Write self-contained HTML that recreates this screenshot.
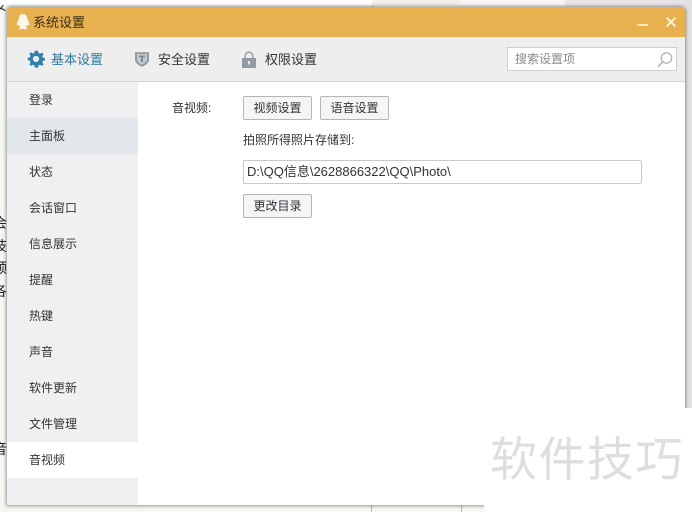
<!DOCTYPE html>
<html lang="zh"><head><meta charset="utf-8"><style>
html,body{margin:0;padding:0}
body{width:692px;height:512px;position:relative;overflow:hidden;background:#f6f6f2;font-family:"Liberation Sans","Noto Sans CJK SC",sans-serif;font-size:12px;color:#333}
.a{position:absolute;white-space:nowrap}
.win{position:absolute;left:7px;top:7px;width:678px;height:498px;background:#fff;border-radius:4px 4px 0 0;box-shadow:0 0 3px 1px rgba(70,70,70,.55);overflow:hidden}
.t{position:absolute;left:0;top:0;width:678px;height:30px;background:#e8b14f}
.bar{position:absolute;left:0;top:30px;width:678px;height:44px;background:#eeeeee;border-bottom:1px solid #d4d4d4}
.side{position:absolute;left:0;top:75px;width:131px;height:423px;background:#f0f0f2}
.it{position:absolute;left:0;width:131px;height:36px;line-height:36px;text-indent:22px;color:#333}
.btn{position:absolute;box-sizing:border-box;height:24px;width:69px;border:1px solid #b5b5b5;border-radius:2px;background:#f3f5f7;text-align:center;line-height:22px;color:#333}
.tab{font-size:13px;line-height:18px}
</style></head><body>
<div class="a" style="left:-6px;top:-2px;font-size:13px;color:#222;line-height:16px">安</div>
<div class="a" style="left:-7px;top:212px;font-size:14px;line-height:22.5px;color:#222;white-space:normal;width:14px">会技颈各</div>
<div class="a" style="left:-7px;top:439px;font-size:14px;color:#222">音</div>
<div class="a" style="left:0;top:0;width:372px;height:5px;background:#fff"></div>
<div class="a" style="left:372px;top:0;width:1px;height:7px;background:#999"></div>
<div class="a" style="left:372px;top:0;width:88px;height:6px;background:#f0efe8"></div>
<div class="a" style="left:371px;top:505px;width:1px;height:7px;background:#bbb"></div>
<div class="a" style="left:461px;top:505px;width:1px;height:7px;background:#bbb"></div>
<div class="a" style="left:565px;top:0;width:127px;height:7px;background:#e6e6e6"></div>
<div class="a" style="left:685px;top:0;width:7px;height:410px;background:#e2e2e2"></div>
<div class="win">
<div class="t"></div>
<svg class="a" style="left:8px;top:6px" width="16" height="18" viewBox="0 0 16 18"><path d="M8 1C4.8 1 3.6 3.600 3.600 6.200 2.600 8 1.400 10.300 2 12.400c.6.6 1.400-.4 1.800-1 .3 1.200.8 2 1.500 2.700-1 .4-1.700 1-1.400 1.600.5.8 3 .6 4.100-.1 1.100.7 3.600.9 4.100.1.300-.6-.4-1.200-1.400-1.600.7-.7 1.200-1.500 1.500-2.700.4.600 1.200 1.600 1.800 1 .6-2.100-.6-4.400-1.600-6.200C12.400 3.600 11.200 1 8 1z" fill="#fbf6ea"/></svg>
<div class="a" style="left:26px;top:7px;font-size:13px;line-height:17px;color:#3a2c14">系统设置</div>
<div class="a" style="left:630px;top:17px;width:11px;height:2px;background:#f8e6bd"></div>
<svg class="a" style="left:658px;top:9px" width="12" height="12" viewBox="0 0 12 12"><path d="M1.500 1.500l9 9M10.500 1.500l-9 9" stroke="#fbeecd" stroke-width="2"/></svg>
<div class="bar"></div>
<svg class="a" style="left:20px;top:43px" width="18" height="18" viewBox="0 0 18 18"><path d="M9 0.800l2 .1.600 2.300 1.400.6 2.100-1.200 1.400 1.500-1.200 2.100.6 1.400 2.300.6v2.100l-2.300.6-.6 1.400 1.200 2.100-1.400 1.500-2.100-1.200-1.400.6-.6 2.300H7.900l-.6-2.300-1.400-.6-2.100 1.200-1.400-1.500 1.200-2.100-.6-1.400L.7 10V7.900L3 7.300l.6-1.400-1.200-2.100 1.400-1.500 2.100 1.200 1.400-.6.6-2.300z" fill="#2f81ad"/><circle cx="9" cy="9" r="3.100" fill="#eee"/></svg>
<div class="a tab" style="left:44px;top:44px;color:#2f7a9f">基本设置</div>
<svg class="a" style="left:127px;top:43px" width="16" height="18" viewBox="0 0 16 18"><path d="M1 2.200h14v7.300c0 3.400-3.600 5.800-7 7.400-3.400-1.600-7-4-7-7.400z" fill="#8f9aa2"/><path d="M3 4h10v5.300c0 2.500-2.600 4.300-5 5.500-2.400-1.200-5-3-5-5.500z" fill="#c4cacd"/><path d="M5 5.500h6v1.800H9v5H7v-5H5z" fill="#7f8a92"/></svg>
<div class="a tab" style="left:151px;top:44px;color:#333">安全设置</div>
<svg class="a" style="left:234px;top:44px" width="16" height="17" viewBox="0 0 16 17"><path d="M4.200 8V5a3.800 3.800 0 0 1 7.600 0v3" fill="none" stroke="#9aa3aa" stroke-width="1.600"/><rect x="1" y="7" width="14" height="10" fill="#929ba3"/><path d="M6.800 10h2.400v1.600L8 14.500l-1.200-2.900z" fill="#eee"/></svg>
<div class="a tab" style="left:258px;top:44px;color:#333">权限设置</div>
<div class="a" style="left:500px;top:40px;width:168px;height:22px;background:#fff;border:1px solid #cfcfcf"></div>
<div class="a" style="left:508px;top:44px;line-height:17px;color:#888">搜索设置项</div>
<svg class="a" style="left:649px;top:44px" width="18" height="18" viewBox="0 0 18 18"><circle cx="10.500" cy="7" r="5.200" fill="none" stroke="#b5b5b5" stroke-width="1.300"/><path d="M6.800 10.800L2 15.800" stroke="#b5b5b5" stroke-width="1.600"/></svg>
<div class="side"></div>
<div class="it" style="top:75px">登录</div>
<div class="it" style="top:111px;background:#e2e7eb">主面板</div>
<div class="it" style="top:147px">状态</div>
<div class="it" style="top:183px">会话窗口</div>
<div class="it" style="top:219px">信息展示</div>
<div class="it" style="top:255px">提醒</div>
<div class="it" style="top:291px">热键</div>
<div class="it" style="top:327px">声音</div>
<div class="it" style="top:363px">软件更新</div>
<div class="it" style="top:399px">文件管理</div>
<div class="it" style="top:435px;background:#fff">音视频</div>
<div class="a" style="left:165px;top:93px;line-height:17px">音视频:</div>
<div class="btn" style="left:236px;top:89px">视频设置</div>
<div class="btn" style="left:313px;top:89px">语音设置</div>
<div class="a" style="left:236px;top:125px;line-height:17px">拍照所得照片存储到:</div>
<div class="a" style="box-sizing:border-box;left:236px;top:153px;width:399px;height:24px;background:#fff;border:1px solid #c8c8c8;border-radius:2px;line-height:22px;padding-left:3px;color:#333;font-size:13px">D:\QQ信息\2628866322\QQ\Photo\</div>
<div class="btn" style="left:236px;top:187px">更改目录</div>
</div>
<div class="a" style="left:484px;top:408px;width:208px;height:104px;background:#fff"></div>
<div class="a" style="left:490px;top:432px;font-size:47px;line-height:56px;letter-spacing:1.500px;color:#dedede">软件技巧</div>
</body></html>
